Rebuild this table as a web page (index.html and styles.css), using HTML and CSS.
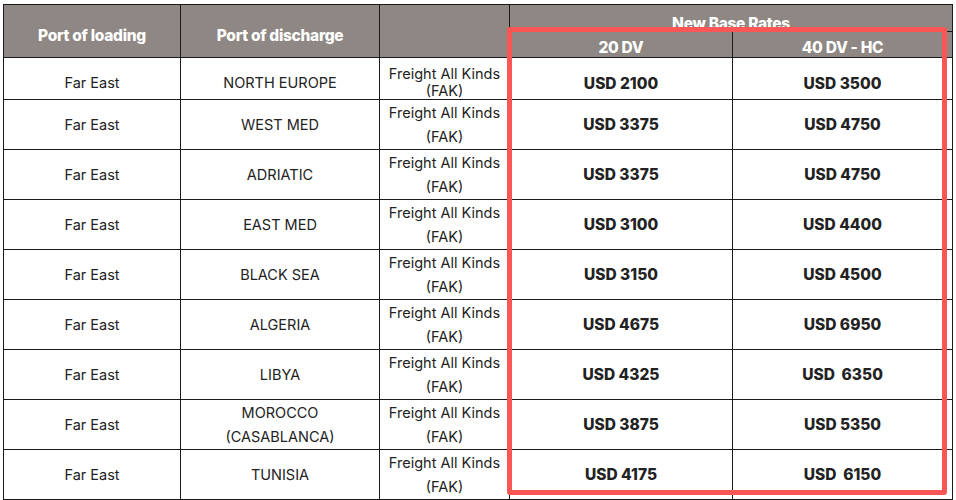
FILE: index.html
```html
<!DOCTYPE html>
<html>
<head>
<meta charset="utf-8">
<link rel="stylesheet" href="styles.css">
</head>
<body>
<div class="wrap">
  <table class="rates">
    <colgroup>
      <col class="c1"><col class="c2"><col class="c3"><col class="c4"><col class="c5">
    </colgroup>
    <thead>
      <tr class="h1">
        <th rowspan="2" class="hdr-main">Port of loading</th>
        <th rowspan="2" class="hdr-main">Port of discharge</th>
        <th rowspan="2"></th>
        <th colspan="2" class="hdr-group">New Base Rates</th>
      </tr>
      <tr class="h2">
        <th>20 DV</th>
        <th>40 DV - HC</th>
      </tr>
    </thead>
    <tbody>
      <tr class="first">
        <td>Far East</td><td>NORTH EUROPE</td><td class="fak tight">Freight All Kinds<br>(FAK)</td><td class="val">USD 2100</td><td class="val">USD 3500</td>
      </tr>
      <tr>
        <td>Far East</td><td>WEST MED</td><td class="fak">Freight All Kinds<br>(FAK)</td><td class="val">USD 3375</td><td class="val">USD 4750</td>
      </tr>
      <tr>
        <td>Far East</td><td>ADRIATIC</td><td class="fak">Freight All Kinds<br>(FAK)</td><td class="val">USD 3375</td><td class="val">USD 4750</td>
      </tr>
      <tr>
        <td>Far East</td><td>EAST MED</td><td class="fak">Freight All Kinds<br>(FAK)</td><td class="val">USD 3100</td><td class="val">USD 4400</td>
      </tr>
      <tr>
        <td>Far East</td><td>BLACK SEA</td><td class="fak">Freight All Kinds<br>(FAK)</td><td class="val">USD 3150</td><td class="val">USD 4500</td>
      </tr>
      <tr>
        <td>Far East</td><td>ALGERIA</td><td class="fak">Freight All Kinds<br>(FAK)</td><td class="val">USD 4675</td><td class="val">USD 6950</td>
      </tr>
      <tr>
        <td>Far East</td><td>LIBYA</td><td class="fak">Freight All Kinds<br>(FAK)</td><td class="val">USD 4325</td><td class="val">USD&nbsp; 6350</td>
      </tr>
      <tr>
        <td>Far East</td><td class="fak">MOROCCO<br>(CASABLANCA)</td><td class="fak">Freight All Kinds<br>(FAK)</td><td class="val">USD 3875</td><td class="val">USD 5350</td>
      </tr>
      <tr>
        <td>Far East</td><td>TUNISIA</td><td class="fak">Freight All Kinds<br>(FAK)</td><td class="val">USD 4175</td><td class="val">USD&nbsp; 6150</td>
      </tr>
    </tbody>
  </table>
  <div class="highlight"></div>
</div>
</body>
</html>
```
FILE: styles.css
```css
html, body {
  margin: 0;
  padding: 0;
  background: #ffffff;
}
body {
  font-family: Inter, "Liberation Sans", sans-serif;
  color: #1c1c1c;
}
.wrap {
  position: relative;
  padding: 4px 0 0 3px;
}
.rates {
  border-collapse: collapse;
  table-layout: fixed;
  width: 949px;
  font-size: 14.5px;
}
.c1 { width: 177px; }
.c2 { width: 199px; }
.c3 { width: 130px; }
.c4 { width: 223px; }
.c5 { width: 220px; }
.rates th, .rates td {
  border: 1px solid #1a1a1a;
  text-align: center;
  padding: 0;
}
.rates th {
  background: #8e8783;
  color: #ffffff;
  font-weight: 800;
  font-size: 15.5px;
  letter-spacing: -0.3px;
  vertical-align: top;
  line-height: 12px;
}
.h1 { height: 27px; }
.h2 { height: 26px; }
.rates .hdr-main { padding-top: 23px; line-height: 16px; }
.rates .hdr-group { padding-top: 13px; }
.rates .h2 th { padding-top: 10px; }
.rates tbody tr { height: 49.75px; }
.rates tbody tr.first { height: 42px; }
.rates td {
  vertical-align: middle;
  line-height: 24px;
  color: #222222;
  padding-top: 1px;
}
.rates .first td { vertical-align: top; padding-top: 13px; }
.rates .first td.val { padding-top: 14px; }
.rates .first td.tight { line-height: 17px; padding-top: 7px; }
.val {
  font-weight: 800;
  font-size: 15.5px;
  color: #1a1a1a;
}
.highlight {
  position: absolute;
  left: 507px;
  top: 27px;
  width: 430px;
  height: 458px;
  border: 5px solid #fa5656;
  border-radius: 3px;
  pointer-events: none;
}
```
